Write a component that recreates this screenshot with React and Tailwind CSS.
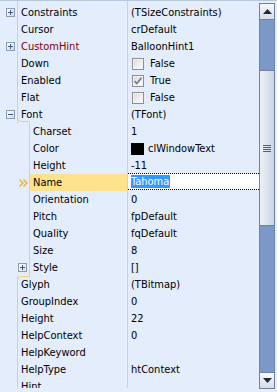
import React from "react";

const ORANGE = "border-[#f1cf7e]";

const rows = [
  { name: "Constraints", value: "(TSizeConstraints)", box: "plus" },
  { name: "Cursor", value: "crDefault" },
  { name: "CustomHint", value: "BalloonHint1", box: "plus", red: true },
  { name: "Down", check: false },
  { name: "Enabled", check: true },
  { name: "Flat", check: false },
  { name: "Font", value: "(TFont)", box: "minus", cornerBottom: true },
  { name: "Charset", value: "1", child: true },
  { name: "Color", value: "clWindowText", child: true, swatch: true },
  { name: "Height", value: "-11", child: true },
  { name: "Name", value: "Tahoma", child: true, selected: true },
  { name: "Orientation", value: "0", child: true },
  { name: "Pitch", value: "fpDefault", child: true },
  { name: "Quality", value: "fqDefault", child: true },
  { name: "Size", value: "8", child: true },
  { name: "Style", value: "[]", child: true, box: "plus" },
  { name: "Glyph", value: "(TBitmap)", cornerTop: true },
  { name: "GroupIndex", value: "0" },
  { name: "Height", value: "22" },
  { name: "HelpContext", value: "0" },
  { name: "HelpKeyword", value: "" },
  { name: "HelpType", value: "htContext" },
  { name: "Hint", value: "" },
];

function ExpandBox({ minus }) {
  return (
    <svg width="9" height="9" viewBox="0 0 9 9" className="block">
      <defs>
        <linearGradient id={minus ? "gm" : "gp"} x1="0" y1="0" x2="1" y2="1">
          <stop offset="0" stopColor="#ffffff" />
          <stop offset="1" stopColor="#cfd9e6" />
        </linearGradient>
      </defs>
      <rect x="0.5" y="0.5" width="8" height="8" fill={`url(#${minus ? "gm" : "gp"})`} stroke="#8a9bb4" />
      <rect x="2" y="4" width="5" height="1" fill="#42597c" />
      {!minus && <rect x="4" y="2" width="1" height="5" fill="#42597c" />}
    </svg>
  );
}

function Checkbox({ checked }) {
  return (
    <svg width="12" height="12" viewBox="0 0 12 12" className="block">
      <defs>
        <linearGradient id="cbg" x1="0" y1="0" x2="1" y2="1">
          <stop offset="0" stopColor="#dcdcdc" />
          <stop offset="1" stopColor="#fbfbfb" />
        </linearGradient>
      </defs>
      <rect x="0.5" y="0.5" width="11" height="11" fill="#f4f4f4" stroke="#8f8f8f" />
      <rect x="2" y="2" width="8" height="8" fill="url(#cbg)" />
      {checked && (
        <path d="M2.5 6 L4.8 8.5 L9.5 2.8" fill="none" stroke="#6f7a89" strokeWidth="1.6" />
      )}
    </svg>
  );
}

function Chevrons() {
  return (
    <svg width="9" height="8" viewBox="0 0 9 8" className="block">
      <path d="M0.5 0.5 L4 4 L0.5 7.5" fill="none" stroke="#f2b020" strokeWidth="1.4" />
      <path d="M4.5 0.5 L8 4 L4.5 7.5" fill="none" stroke="#f2b020" strokeWidth="1.4" />
    </svg>
  );
}

function Row({ r }) {
  const gutterW = r.child ? "w-[29px]" : "w-[17px]";
  const nameW = r.child ? "w-[99px]" : "w-[111px]";
  return (
    <div className="flex h-[17px] shrink-0">
      <div className={`${gutterW} shrink-0 flex items-center`}>
        {r.box && (
          <div className={r.child ? "ml-[18px]" : "ml-[6px]"}>
            <ExpandBox minus={r.box === "minus"} />
          </div>
        )}
        {r.selected && (
          <div className="ml-[19px]">
            <Chevrons />
          </div>
        )}
      </div>
      <div
        className={`${nameW} shrink-0 relative border-l border-r ${ORANGE} pl-[3px] leading-[17px] whitespace-nowrap overflow-hidden ${
          r.selected ? "bg-[#fee28e]" : ""
        } ${r.red ? "text-[#800000]" : "text-black"}`}
      >
        {r.cornerBottom && (
          <div className={`absolute left-[-1px] bottom-[1px] w-[13px] h-[6px] border-l border-b ${ORANGE} rounded-bl-[5px] bg-[#e3edfb]`} />
        )}
        {r.cornerTop && (
          <div className={`absolute left-[-1px] top-0 w-[13px] h-[6px] border-l border-t ${ORANGE} rounded-tl-[5px] bg-[#e3edfb]`} />
        )}
        <span className="relative">{r.name}</span>
      </div>
      {r.selected ? (
        <div className="flex-1 bg-white border-y border-dotted border-black flex items-center pl-[3px] -mt-px h-[17px]">
          <span className="bg-[#3399ff] text-white leading-[13px] pr-[1px]">Tahoma</span>
        </div>
      ) : r.check !== undefined ? (
        <div className="flex-1 flex items-center pl-[4px] gap-[6px] leading-[17px]">
          <Checkbox checked={r.check} />
          <span>{r.check ? "True" : "False"}</span>
        </div>
      ) : r.swatch ? (
        <div className="flex-1 flex items-center pl-[3px] gap-[4px] leading-[17px]">
          <div className="w-[13px] h-[12px] bg-black" />
          <span>{r.value}</span>
        </div>
      ) : (
        <div className="flex-1 pl-[3px] leading-[17px] whitespace-nowrap">{r.value}</div>
      )}
    </div>
  );
}

function ScrollButton({ down }) {
  return (
    <div className="h-[17px] shrink-0 border border-[#6f819e] bg-gradient-to-b from-[#f7f9fb] to-[#d6dee9] flex items-center justify-center">
      <svg width="9" height="5" viewBox="0 0 9 5" className="block">
        {down ? (
          <path d="M0 0 L9 0 L4.5 5 Z" fill="#1f2a3a" />
        ) : (
          <path d="M0 5 L9 5 L4.5 0 Z" fill="#1f2a3a" />
        )}
      </svg>
    </div>
  );
}

export default function App() {
  return (
    <div
      className="w-[277px] h-[392px] bg-[#e3edfb] border-t border-[#b8c8dc] flex overflow-hidden text-[11px]"
      style={{ fontFamily: '"DejaVu Sans Condensed", "Liberation Sans", sans-serif' }}
    >
      <div className="w-[259px] h-[387px] overflow-hidden flex flex-col shrink-0">
        <div className="flex h-[3px] shrink-0">
          <div className="w-[17px] shrink-0" />
          <div className={`w-[111px] shrink-0 border-l border-r ${ORANGE}`} />
        </div>
        {rows.map((r, i) => (
          <Row key={i} r={r} />
        ))}
      </div>
      <div className="w-[16px] mt-[2px] h-[386px] flex flex-col shrink-0">
        <ScrollButton />
        <div className="h-[50px] shrink-0 bg-[#7b98c6] border-x border-[#6b86b2]" />
        <div className="h-[156px] shrink-0 border border-[#6f819e] bg-gradient-to-r from-[#eef2f7] to-[#c9d4e2] flex items-center justify-center">
          <div className="flex flex-col gap-[1px]">
            <div className="w-[8px] h-[1px] bg-[#4f6384]" />
            <div className="w-[8px] h-[1px] bg-[#4f6384]" />
            <div className="w-[8px] h-[1px] bg-[#4f6384]" />
            <div className="w-[8px] h-[1px] bg-[#4f6384]" />
          </div>
        </div>
        <div className="flex-1 bg-[#7b98c6] border-x border-[#6b86b2]" />
        <ScrollButton down />
      </div>
    </div>
  );
}
